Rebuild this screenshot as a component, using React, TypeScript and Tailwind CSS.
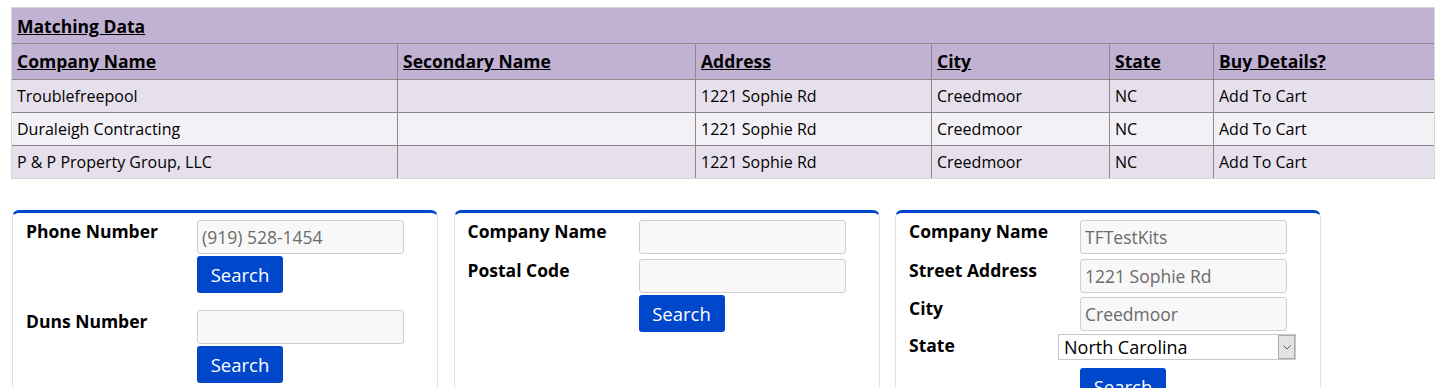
import React from "react";

const font = { fontFamily: '"Open Sans", "Liberation Sans", sans-serif' };

const rows = [
  ["Troublefreepool", "", "1221 Sophie Rd", "Creedmoor", "NC", "Add To Cart"],
  ["Duraleigh Contracting", "", "1221 Sophie Rd", "Creedmoor", "NC", "Add To Cart"],
  ["P & P Property Group, LLC", "", "1221 Sophie Rd", "Creedmoor", "NC", "Add To Cart"],
];
const heads = ["Company Name", "Secondary Name", "Address", "City", "State", "Buy Details?"];

function Input({ value = "" }: { value?: string }) {
  return (
    <div className="w-[207px] h-[34px] border border-[#cfcfcf] rounded-[3px] bg-[#f8f8f8] pl-[4px] flex items-center text-[17.5px] text-[#6b6b6b]">
      {value}
    </div>
  );
}

function Button() {
  return (
    <div className="w-[86px] h-[37px] rounded-[3px] bg-[#0047cc] text-white text-[18.5px] flex items-center justify-center">
      Search
    </div>
  );
}

function Label({ children }: { children: React.ReactNode }) {
  return <div className="w-[171px] shrink-0 font-bold text-[17.5px] text-black leading-[22px]">{children}</div>;
}

function Card({ children }: { children: React.ReactNode }) {
  return (
    <div className="w-[426px] h-[200px] border border-[#e2e2e2] border-t-[3px] border-t-[#0047cc] rounded-t-[7px] pt-[7px] pl-[13px]">
      {children}
    </div>
  );
}

export default function App() {
  return (
    <div className="bg-white w-[1456px] h-[388px] overflow-hidden pt-[7px] pl-[11px]" style={font}>
      <div className="w-[1424px] border border-[#d6d6d6] text-[16px] text-black">
        <div className="h-[35px] bg-[#c1b2d3] flex items-center pl-[5px] pt-[1px] font-bold underline text-[17.5px]">
          Matching Data
        </div>
        <div className="grid grid-cols-[385px_298px_236px_178px_104px_1fr] bg-[#c1b2d3] border-t border-[#8a8a8a] h-[36px]">
          {heads.map((h, i) => (
            <div key={h} className={`flex items-center pl-[5px] font-bold underline text-[17.5px] ${i > 0 ? "border-l border-[#8a8a8a]" : ""}`}>
              {h}
            </div>
          ))}
        </div>
        {rows.map((r, ri) => (
          <div
            key={ri}
            className={`grid grid-cols-[385px_298px_236px_178px_104px_1fr] border-t border-[#8a8a8a] h-[33px] ${ri === 1 ? "bg-[#f3f1f6]" : "bg-[#e6e0ec]"}`}
          >
            {r.map((c, i) => (
              <div key={i} className={`flex items-center pl-[5px] ${i > 0 ? "border-l border-[#8a8a8a]" : ""}`}>
                {c}
              </div>
            ))}
          </div>
        ))}
      </div>

      <div className="flex gap-[15.5px] mt-[31px] ml-[1px]">
        <Card>
          <div className="flex">
            <Label>Phone Number</Label>
            <div className="flex flex-col gap-[2px]">
              <Input value="(919) 528-1454" />
              <Button />
            </div>
          </div>
          <div className="flex mt-[17px]">
            <Label>Duns Number</Label>
            <div className="flex flex-col gap-[2px]">
              <Input />
              <Button />
            </div>
          </div>
        </Card>
        <Card>
          <div className="flex">
            <Label>Company Name</Label>
            <Input />
          </div>
          <div className="flex mt-[5px]">
            <Label>Postal Code</Label>
            <div className="flex flex-col gap-[2px]">
              <Input />
              <Button />
            </div>
          </div>
        </Card>
        <Card>
          <div className="flex">
            <Label>Company Name</Label>
            <Input value="TFTestKits" />
          </div>
          <div className="flex mt-[5px]">
            <Label>Street Address</Label>
            <Input value="1221 Sophie Rd" />
          </div>
          <div className="flex mt-[4px]">
            <Label>City</Label>
            <Input value="Creedmoor" />
          </div>
          <div className="flex mt-[3px]">
            <Label>State</Label>
            <div className="-ml-[22px] w-[238px] h-[26px] border border-[#c8c8c8] bg-white flex items-center">
              <div className="flex-1 pl-[5px] text-[18px] text-black leading-none">North Carolina</div>
              <div className="w-[17px] h-[24px] bg-[#e3e3e3] border border-[#ababab] flex items-center justify-center">
                <svg width="8" height="5" viewBox="0 0 8 5" fill="none">
                  <path d="M0.5 0.5 L4 4 L7.5 0.5" stroke="#555" strokeWidth="1" />
                </svg>
              </div>
            </div>
          </div>
          <div className="flex mt-[8px] pl-[171px]">
            <Button />
          </div>
        </Card>
      </div>
    </div>
  );
}
